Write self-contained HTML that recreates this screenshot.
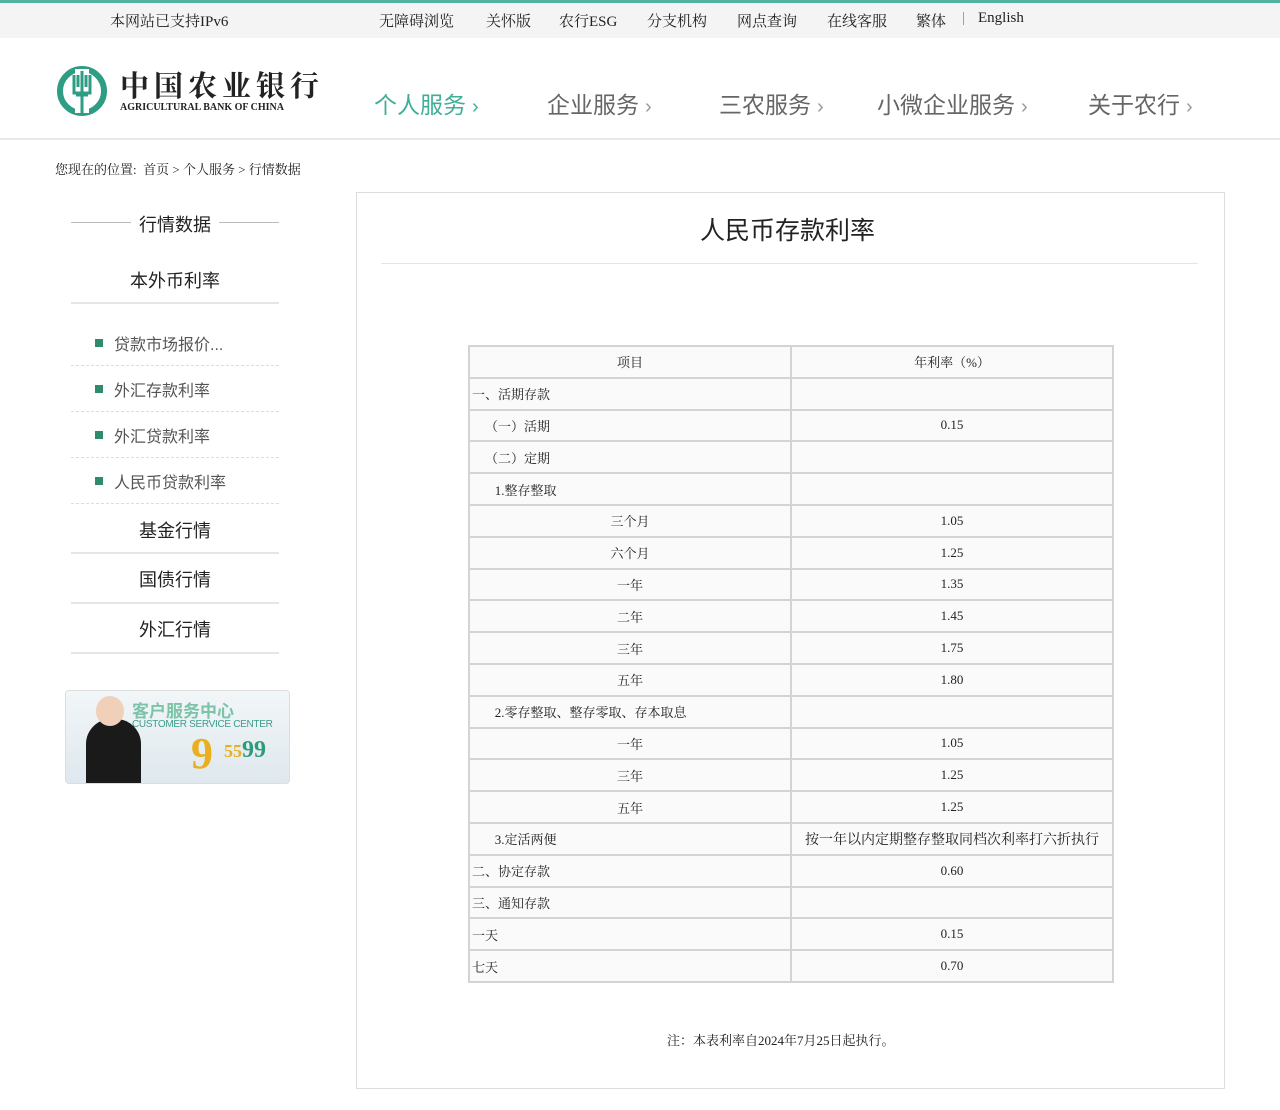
<!DOCTYPE html>
<html><head><meta charset="utf-8"><style>
*{margin:0;padding:0;box-sizing:border-box}
body{width:1280px;height:1110px;background:#fff;font-family:"Liberation Serif","Noto Serif CJK SC",serif;color:#222;position:relative;overflow:hidden}
.abs{position:absolute;white-space:nowrap}
.top{position:absolute;left:0;top:0;width:1280px;height:38px;background:#f4f4f4;border-top:3px solid #4fb3a0}
.top span{position:absolute;top:7px;font-size:15px}
.hdr{position:absolute;left:0;top:38px;width:1280px;height:102px;border-bottom:2px solid #e8e8e8;background:#fff}
.nav{position:absolute;top:48px;font-family:"Liberation Sans","Noto Sans CJK SC",sans-serif;font-size:23px;color:#666}
.nav i{font-style:normal;font-size:20px;color:#999;margin-left:6px}
.side{position:absolute;left:71px;width:208px;text-align:center;font-family:"Liberation Sans","Noto Sans CJK SC",sans-serif;font-size:18px;color:#222}
.sub{position:absolute;left:71px;width:208px;height:46px;border-bottom:1px dashed #ddd;font-size:16px;color:#555;font-family:"Liberation Sans","Noto Sans CJK SC",sans-serif}
.sub b{position:absolute;left:24px;top:19px;width:8px;height:8px;background:#2e8b6e}
.sub span{position:absolute;left:43px;top:11px}
table{position:absolute;left:468px;top:345px;border-collapse:collapse;font-size:13px}
td{border:2px solid #d4d4d4;height:31.8px;background:#fafafa;padding:0 2px}
td:first-child{width:322px}td:last-child{width:322px;text-align:center}
.c{text-align:center}
</style></head><body>
<div class="top">
<span style="left:110px">本网站已支持IPv6</span>
<span style="left:379px">无障碍浏览</span><span style="left:486px">关怀版</span><span style="left:559px">农行ESG</span><span style="left:647px">分支机构</span><span style="left:737px">网点查询</span><span style="left:827px">在线客服</span><span style="left:916px">繁体</span><span style="left:962px;color:#888">|</span><span style="left:978px">English</span>
</div>
<div class="hdr">
<svg class="abs" style="left:56px;top:27px" width="52" height="52" viewBox="0 0 52 52"><circle cx="26" cy="26" r="22" fill="none" stroke="#2f9c84" stroke-width="6"/><rect x="19" y="4" width="14" height="44" fill="#fff"/><path d="M18 10v18h16V10M22 10v12M26 6v42M30 10v12M20 30h12" stroke="#2f9c84" stroke-width="3" fill="none"/></svg>
<div class="abs" style="left:120px;top:26px;font-size:29px;font-weight:bold;letter-spacing:5px;color:#222">中国农业银行</div>
<div class="abs" style="left:120px;top:64px;font-size:10px;font-weight:bold;letter-spacing:0">AGRICULTURAL BANK OF CHINA</div>
<div class="nav" style="left:374px;color:#3fae98">个人服务<i style="color:#3fae98">›</i></div>
<div class="nav" style="left:547px">企业服务<i>›</i></div>
<div class="nav" style="left:719px">三农服务<i>›</i></div>
<div class="nav" style="left:877px">小微企业服务<i>›</i></div>
<div class="nav" style="left:1088px">关于农行<i>›</i></div>
</div>
<div class="abs" style="left:55px;top:159px;font-size:13px">您现在的位置:&nbsp; 首页 &gt; 个人服务 &gt; 行情数据</div>
<div class="abs" style="left:71px;top:222px;width:60px;border-top:1px solid #bbb"></div>
<div class="abs" style="left:219px;top:222px;width:60px;border-top:1px solid #bbb"></div>
<div class="side" style="top:211px">行情数据</div>
<div class="side" style="top:267px;height:37px;border-bottom:2px solid #e5e5e5">本外币利率</div>
<div class="sub" style="top:320px"><b></b><span>贷款市场报价...</span></div>
<div class="sub" style="top:366px"><b></b><span>外汇存款利率</span></div>
<div class="sub" style="top:412px"><b></b><span>外汇贷款利率</span></div>
<div class="sub" style="top:458px"><b></b><span>人民币贷款利率</span></div>
<div class="side" style="top:505px;height:49px;padding-top:12px;border-bottom:2px solid #e5e5e5">基金行情</div>
<div class="side" style="top:554px;height:50px;padding-top:12px;border-bottom:2px solid #e5e5e5">国债行情</div>
<div class="side" style="top:604px;height:50px;padding-top:12px;border-bottom:2px solid #e5e5e5">外汇行情</div>
<div class="abs" style="left:65px;top:690px;width:225px;height:94px;border:1px solid #ddd;border-radius:4px;background:linear-gradient(#f2f6f8,#dfe8ee);overflow:hidden">
<div class="abs" style="left:20px;top:28px;width:55px;height:66px;background:#1a1a1a;border-radius:25px 25px 0 0"></div>
<div class="abs" style="left:30px;top:5px;width:28px;height:30px;background:#f0d0b8;border-radius:50%"></div>
<div class="abs" style="left:66px;top:6px;font-size:17px;color:#7cc3a8;font-family:'Liberation Sans','Noto Sans CJK SC',sans-serif;font-weight:bold">客户服务中心</div>
<div class="abs" style="left:66px;top:28px;font-size:10px;color:#3a9c8a;font-family:'Liberation Sans',sans-serif;letter-spacing:-0.3px">CUSTOMER SERVICE CENTER</div>
<div class="abs" style="left:125px;top:38px;font-size:44px;color:#e8b020;font-weight:bold;line-height:50px">9</div>
<div class="abs" style="left:158px;top:46px;font-size:24px;color:#2e9a7c;font-weight:bold"><span style="color:#e8b020;font-size:18px">55</span>99</div>
</div>
<div class="abs" style="left:356px;top:192px;width:869px;height:897px;border:1px solid #ddd"></div>
<div class="abs" style="left:381px;top:263px;width:817px;border-top:1px solid #dde9e6"></div>
<div class="abs" style="left:700px;top:211px;font-size:25px;font-family:'Liberation Sans','Noto Sans CJK SC',sans-serif">人民币存款利率</div>
<table>
<tr><td class="c">项目</td><td>年利率（%）</td></tr>
<tr><td>一、活期存款</td><td></td></tr>
<tr><td>&nbsp;&nbsp;&nbsp;&nbsp;（一）活期</td><td>0.15</td></tr>
<tr><td>&nbsp;&nbsp;&nbsp;&nbsp;（二）定期</td><td></td></tr>
<tr><td>&nbsp;&nbsp;&nbsp;&nbsp;&nbsp;&nbsp;&nbsp;1.整存整取</td><td></td></tr>
<tr><td class="c">三个月</td><td>1.05</td></tr>
<tr><td class="c">六个月</td><td>1.25</td></tr>
<tr><td class="c">一年</td><td>1.35</td></tr>
<tr><td class="c">二年</td><td>1.45</td></tr>
<tr><td class="c">三年</td><td>1.75</td></tr>
<tr><td class="c">五年</td><td>1.80</td></tr>
<tr><td>&nbsp;&nbsp;&nbsp;&nbsp;&nbsp;&nbsp;&nbsp;2.零存整取、整存零取、存本取息</td><td></td></tr>
<tr><td class="c">一年</td><td>1.05</td></tr>
<tr><td class="c">三年</td><td>1.25</td></tr>
<tr><td class="c">五年</td><td>1.25</td></tr>
<tr><td>&nbsp;&nbsp;&nbsp;&nbsp;&nbsp;&nbsp;&nbsp;3.定活两便</td><td style="font-size:14px">按一年以内定期整存整取同档次利率打六折执行</td></tr>
<tr><td>二、协定存款</td><td>0.60</td></tr>
<tr><td>三、通知存款</td><td></td></tr>
<tr><td>一天</td><td>0.15</td></tr>
<tr><td>七天</td><td>0.70</td></tr>
</table>
<div class="abs" style="left:667px;top:1030px;font-size:13px">注：本表利率自2024年7月25日起执行。</div>
</body></html>
